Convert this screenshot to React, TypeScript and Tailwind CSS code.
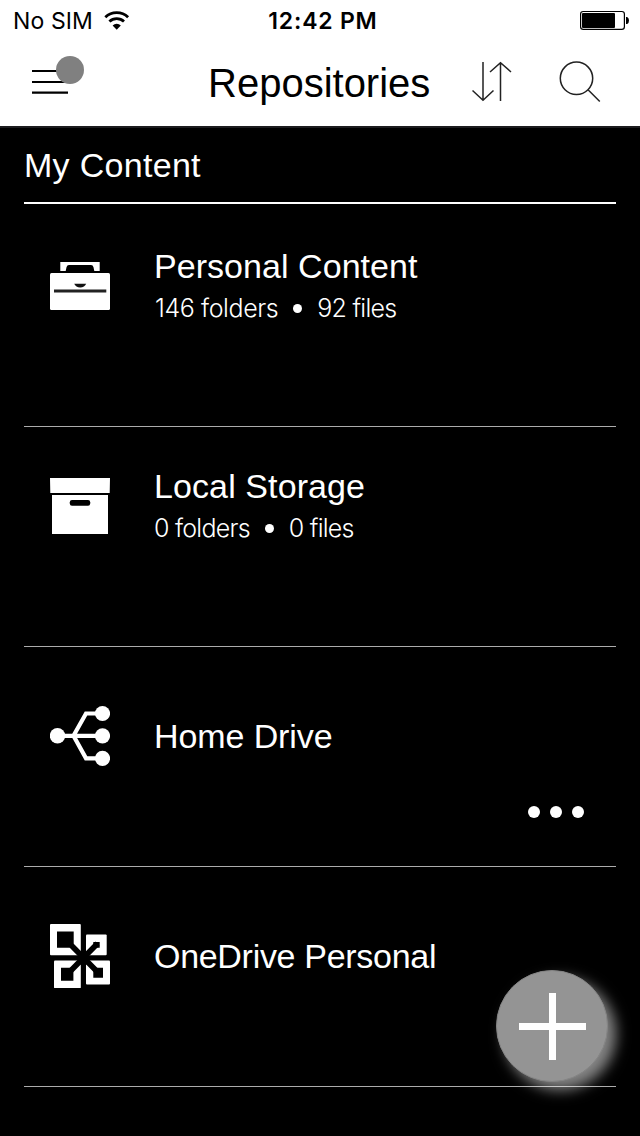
import type { ReactNode } from 'react';

function StatusBar() {
  return (
    <div className="flex h-10 items-center justify-between pr-2.5 pl-[13px] font-['Inter',sans-serif]">
      <div className="flex w-[202px] items-center gap-[11px]">
        <span className="pt-0.5 text-[23px] leading-10 tracking-[0.1px] whitespace-nowrap">No SIM</span>
        <svg className="mt-px" width="26" height="20" viewBox="104 10 26 20" fill="none" stroke="#000">
          <path d="M105.3 16.2a16.5 16.5 0 0 1 22.8 0" strokeWidth="2.8" />
          <path d="M109.4 20.5a10.6 10.6 0 0 1 14.6 0" strokeWidth="2.8" />
          <path d="M112.6 24.4a5.8 5.8 0 0 1 8.2 0l-4.1 4.4z" fill="#000" stroke="none" />
        </svg>
      </div>
      <span className="pt-0.5 text-[23px] leading-10 font-semibold tracking-[0.8px] whitespace-nowrap">12:42 PM</span>
      <div className="flex w-[199px] justify-end">
        <svg width="50" height="20" viewBox="580 10 50 20">
          <rect x="580.6" y="11.5" width="43.8" height="17.8" rx="2.6" fill="none" stroke="#000" strokeWidth="1.2" />
          <rect x="582" y="13" width="33" height="15" rx="1" />
          <path d="M626 17h1.2q1.8 1.2 1.8 3.5t-1.8 3.5H626z" />
        </svg>
      </div>
    </div>
  );
}

function Header() {
  return (
    <header className="h-[126px] bg-white text-black">
      <StatusBar />
      <div className="flex h-[86px] items-start">
        <button aria-label="Menu" className="mt-4 ml-8 block">
          <svg width="52" height="42" viewBox="32 56 52 42">
            <path d="M32 71h36M32 82h36M32 92.7h36" stroke="#000" strokeWidth="2.2" />
            <circle cx="70" cy="70" r="14" fill="#808080" />
          </svg>
        </button>
        <h1 className="mt-5 ml-[124px] w-[264px] text-[40px] leading-[46px] tracking-[0px] whitespace-nowrap">Repositories</h1>
        <button aria-label="Sort" className="mt-5 block">
          <svg width="40" height="44" viewBox="472 60 40 44" fill="none" stroke="#222" strokeWidth="1.5">
            <path d="M483 62v38M472.5 90.5L483 100.3 493.5 90.5M500.5 101V63M490 72L500.5 62.7 511 72" />
          </svg>
        </button>
        <button aria-label="Search" className="mt-5 ml-[46px] block">
          <svg width="44" height="44" viewBox="558 60 44 44" fill="none" stroke="#222" strokeWidth="1.5">
            <circle cx="576.5" cy="78.3" r="16.2" />
            <path d="M588 89.7L599.8 101.5" />
          </svg>
        </button>
      </div>
    </header>
  );
}

const briefcase = (
  <svg width="60" height="64" viewBox="50 254 60 64">
    <path d="M60.3 271v-9h39.4v9H94.3l-.8-3.8q-.5-2.2-2.5-2.2H69q-2 0-2.5 2.2l-.8 3.8z" fill="#fff" />
    <rect x="50" y="273" width="60" height="37" rx="1.5" fill="#fff" />
    <path d="M54 291h52.3" stroke="#222" strokeWidth="3" />
    <path d="M74.2 283.8h12q-1.6 3.6-6 3.6t-6-3.6z" fill="#111" />
  </svg>
);

const box = (
  <svg width="60" height="64" viewBox="50 474 60 64">
    <path d="M50 478h60l-.3 15H50.3zM52 495h56v39H52z" fill="#fff" />
    <rect x="69.8" y="500" width="20.4" height="5.8" rx="2.2" fill="#000" />
  </svg>
);

const network = (
  <svg width="60" height="64" viewBox="50 704 60 64">
    <g fill="#fff">
      <circle cx="57.5" cy="735.8" r="7.7" />
      <circle cx="102.5" cy="713.5" r="7.6" />
      <circle cx="102.5" cy="735.8" r="7.6" />
      <circle cx="102.5" cy="758.3" r="7.6" />
    </g>
    <path d="M58 735.8h44M102 713.5H86L73.5 735.8 86 758.3h16" fill="none" stroke="#fff" strokeWidth="4.2" />
  </svg>
);

const oneDrive = (
  <svg width="60" height="64" viewBox="50 924 60 64">
    <g fill="#fff">
      <rect x="50" y="924" width="30.8" height="31.3" rx="1" />
      <rect x="86" y="934.4" width="20.7" height="20.9" rx="1" />
      <rect x="54" y="960.4" width="26.8" height="27.8" rx="1" />
      <rect x="86" y="960.4" width="24" height="24.2" rx="1" />
    </g>
    <path d="M57 931.4h16.7v16.4H57zM93.3 942h6.4v5.8h-6.4zM61 967.7h12.4v13H61zM93.3 967.7h9.7v10h-9.7z" />
    <path d="M71.5 945.5L97 971.5M97.5 943.5L70.5 971" stroke="#000" strokeWidth="5.6" />
    <path d="M78.5 952h10v12.5h-10z" />
  </svg>
);

type Repository = {
  name: string;
  icon: ReactNode;
  folders?: string;
  files?: string;
  nameClass: string;
  detailClass?: string;
  more?: boolean;
};

const repositories: Repository[] = [
  { name: 'Personal Content', icon: briefcase, folders: '146 folders', files: '92 files', nameClass: 'tracking-[0.05px]', detailClass: 'pl-px tracking-[-0.4px]' },
  { name: 'Local Storage', icon: box, folders: '0 folders', files: '0 files', nameClass: 'tracking-[0.1px]', detailClass: 'tracking-[-0.75px]' },
  { name: 'Home Drive', icon: network, nameClass: 'tracking-[-0.1px]', more: true },
  { name: 'OneDrive Personal', icon: oneDrive, nameClass: 'tracking-[-0.3px]' },
];

function RepositoryRow({ name, icon, folders, files, nameClass, detailClass, more }: Repository) {
  return (
    <li className="flex h-[220px] flex-col border-b border-[#acacac]">
      <div className="flex">
        <div className={`ml-[26px] w-[104px] shrink-0 ${folders ? 'pt-[47px]' : 'pt-[57px]'}`}>{icon}</div>
        <div className={folders ? 'pt-[39px]' : 'pt-[69px]'}>
          <h3 className={`text-[34px] leading-10 whitespace-nowrap ${nameClass}`}>{name}</h3>
          {folders && (
            <p className={`mt-1.5 flex h-8 items-center font-['Inter',sans-serif] text-[25px] leading-8 font-light whitespace-nowrap ${detailClass}`}>
              <span>{folders}</span>
              <span className="mx-[15px] size-[9px] rounded-full bg-white" />
              <span className="tracking-[-0.75px]">{files}</span>
            </p>
          )}
        </div>
      </div>
      {more && (
        <button aria-label="More options" className="mt-[38px] mr-8 flex gap-2.5 self-end">
          <span className="size-3 rounded-full bg-white" />
          <span className="size-3 rounded-full bg-white" />
          <span className="size-3 rounded-full bg-white" />
        </button>
      )}
    </li>
  );
}

export default function App() {
  return (
    <div className="relative h-[1136px] w-[640px] overflow-hidden bg-black font-['Liberation_Sans',Arial,sans-serif] text-white">
      <Header />
      <div className="h-0.5 bg-[#1c1c1e]" />
      <main className="px-6">
        <h2 className="h-[76px] border-b-2 border-white pt-[17px] text-[34px] leading-10 tracking-[0.3px]">My Content</h2>
        <ul className="pt-[3px]">
          {repositories.map((repository) => (
            <RepositoryRow key={repository.name} {...repository} />
          ))}
        </ul>
      </main>
      <button
        aria-label="Add"
        className="absolute top-[970px] left-[496px] flex size-28 items-center justify-center rounded-full border border-[#858585] bg-[#949494] shadow-[8px_8px_14px_rgba(255,255,255,0.52)]"
      >
        <svg width="68" height="68" viewBox="0 0 68 68">
          <path d="M1 34.5h67M34.5 1v67" stroke="#fff" strokeWidth="7" />
        </svg>
      </button>
    </div>
  );
}
